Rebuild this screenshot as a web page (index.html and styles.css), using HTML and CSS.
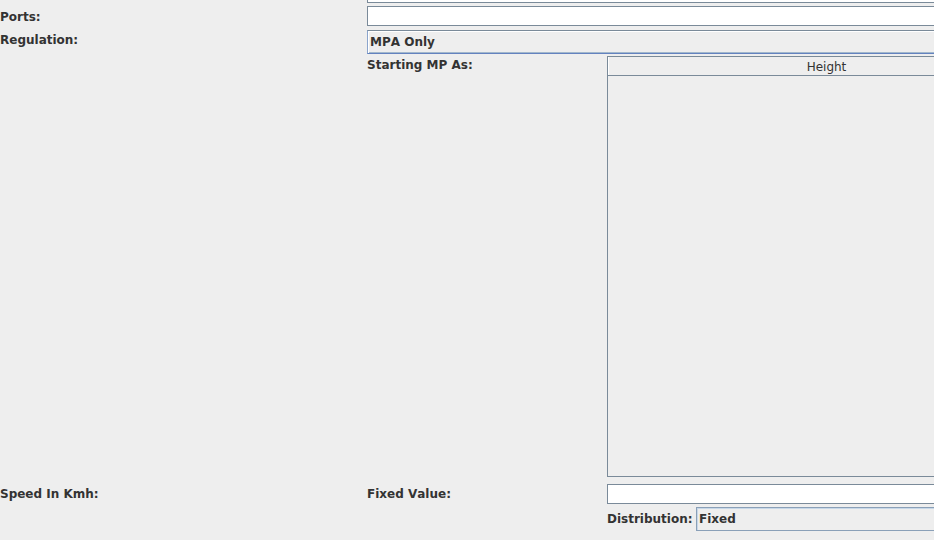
FILE: index.html
```html
<!DOCTYPE html>
<html>
<head>
<meta charset="utf-8">
<link rel="stylesheet" href="styles.css">
</head>
<body>
<div class="form">
  <div class="row row-top">
    <div class="label"></div>
    <div class="field field-cut span2"></div>
  </div>
  <div class="row row-ports">
    <div class="label lbl-ports">Ports:</div>
    <div class="field span2"></div>
  </div>
  <div class="row row-reg">
    <div class="label lbl-reg">Regulation:</div>
    <div class="combo combo-focus span2">MPA Only</div>
  </div>
  <div class="row row-start">
    <div class="label"></div>
    <div class="label lbl-start">Starting MP As:</div>
    <div class="table">
      <div class="thead">Height</div>
      <div class="tbody"></div>
    </div>
  </div>
  <div class="row row-speed">
    <div class="label lbl-speed">Speed In Kmh:</div>
    <div class="label lbl-speed">Fixed Value:</div>
    <div class="field"></div>
  </div>
  <div class="row row-dist">
    <div class="label"></div>
    <div class="label"></div>
    <div class="dist">
      <div class="label lbl-dist">Distribution:</div>
      <div class="combo combo-dist">Fixed</div>
    </div>
  </div>
</div>
</body>
</html>
```

FILE: styles.css
```css
html, body {
  margin: 0;
  padding: 0;
  background: #eeeeee;
  overflow: hidden;
  width: 934px;
  height: 540px;
}

.form {
  width: 1046px;
  display: flex;
  flex-direction: column;
  font-family: "DejaVu Sans", sans-serif;
  font-size: 12px;
  font-kerning: none;
  color: #333333;
}

.row {
  display: grid;
  grid-template-columns: 367px 240px 439px;
}

.span2 {
  grid-column: 2 / 4;
}

.label {
  font-weight: bold;
  line-height: 14px;
  white-space: nowrap;
}

.row-top { height: 3px; }
.row-ports { margin-top: 3px; height: 20px; }
.row-reg { margin-top: 4px; height: 24px; }
.row-start { margin-top: 2px; height: 421px; }
.row-speed { margin-top: 7px; height: 20px; }
.row-dist { margin-top: 3px; height: 24px; }

.lbl-ports { padding-top: 4px; }
.lbl-reg { padding-top: 3px; }
.lbl-start { padding-top: 2px; }
.lbl-speed { padding-top: 3px; }
.lbl-dist { padding-top: 5px; width: 89px; }

.field {
  box-sizing: border-box;
  background: #ffffff;
  border: 1px solid #7a8a99;
  height: 20px;
}

.field-cut {
  height: 3px;
  border-top: none;
}

.combo {
  box-sizing: border-box;
  height: 24px;
  background: #eeeeee;
  border: 1px solid #7a8a99;
  box-shadow: inset 1px 1px 0 #ffffff;
  padding: 4px 0 0 2px;
  font-weight: bold;
  line-height: 14px;
  white-space: nowrap;
}

.combo-focus {
  border-color: #7a8a99 #7a8a99 #6382bf #8aa4cc;
  box-shadow: inset 1px 1px 0 #ffffff, inset 0 -1px 0 #a3b8cc;
}

.combo-dist {
  flex: 1;
  padding-left: 2px;
  border-color: #8aa0b8;
  box-shadow: inset 1px 1px 0 #c8d8e8;
}

.table {
  box-sizing: border-box;
  border: 1px solid #7a8a99;
  display: flex;
  flex-direction: column;
  background: #eeeeee;
}

.thead {
  box-sizing: border-box;
  height: 19px;
  border-bottom: 1px solid #7a8a99;
  box-shadow: inset 1px 0 0 #ffffff;
  text-align: center;
  padding-top: 3px;
  line-height: 14px;
  color: #333333;
}

.tbody {
  flex: 1;
}

.dist {
  display: flex;
}
```
